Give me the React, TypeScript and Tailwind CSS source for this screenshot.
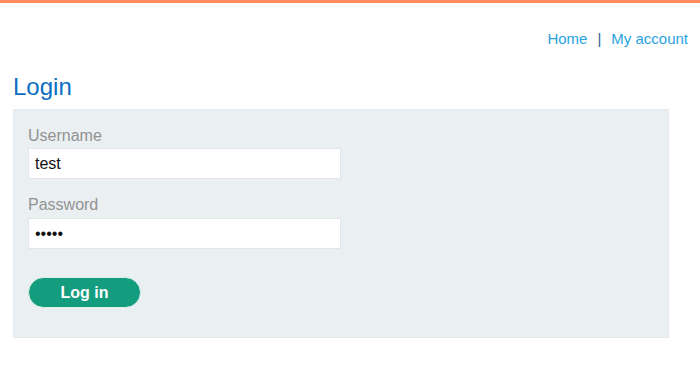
export default function App() {
  return (
    <div className="min-h-[381px] bg-white border-t-[3px] border-[#ff8a5f] font-['Liberation_Sans',Arial,sans-serif]">
      <div className="px-[13px] pr-[12px]">
        <nav className="flex justify-end items-center pt-[24px] h-[48px] text-[15px] text-[#29a3e0] leading-[20px]">
          <a href="#" className="hover:underline">Home</a>
          <span className="mx-[10px] text-[#2a5d9c]">|</span>
          <a href="#" className="hover:underline">My account</a>
        </nav>
        <h1 className="mt-[22px] text-[24px] leading-[28px] text-[#0a6fc2]">Login</h1>
        <section className="mt-[8px] w-[656px] h-[229px] bg-[#eaeff2] border border-[#e4eaee] px-[14px] pt-[16px]">
          <form className="flex flex-col" onSubmit={(e) => e.preventDefault()}>
            <label className="text-[16px] leading-[20px] text-[#929292]">Username</label>
            <input
              type="text"
              defaultValue="test"
              className="mt-[2px] w-[313px] h-[31px] bg-white border border-[#e3e6e8] px-[6px] text-[16px] text-[#111] outline-none"
            />
            <label className="mt-[16px] text-[16px] leading-[20px] text-[#929292]">Password</label>
            <input
              type="password"
              defaultValue="12345"
              className="mt-[3px] w-[313px] h-[31px] bg-white border border-[#e3e6e8] px-[6px] text-[16px] text-[#111] outline-none"
            />
            <button
              type="submit"
              className="mt-[28px] w-[113px] h-[31px] rounded-full bg-[#149c7e] border border-[#e0f0ea] text-white font-bold text-[16px] leading-[20px]"
            >
              Log in
            </button>
          </form>
        </section>
      </div>
    </div>
  )
}
